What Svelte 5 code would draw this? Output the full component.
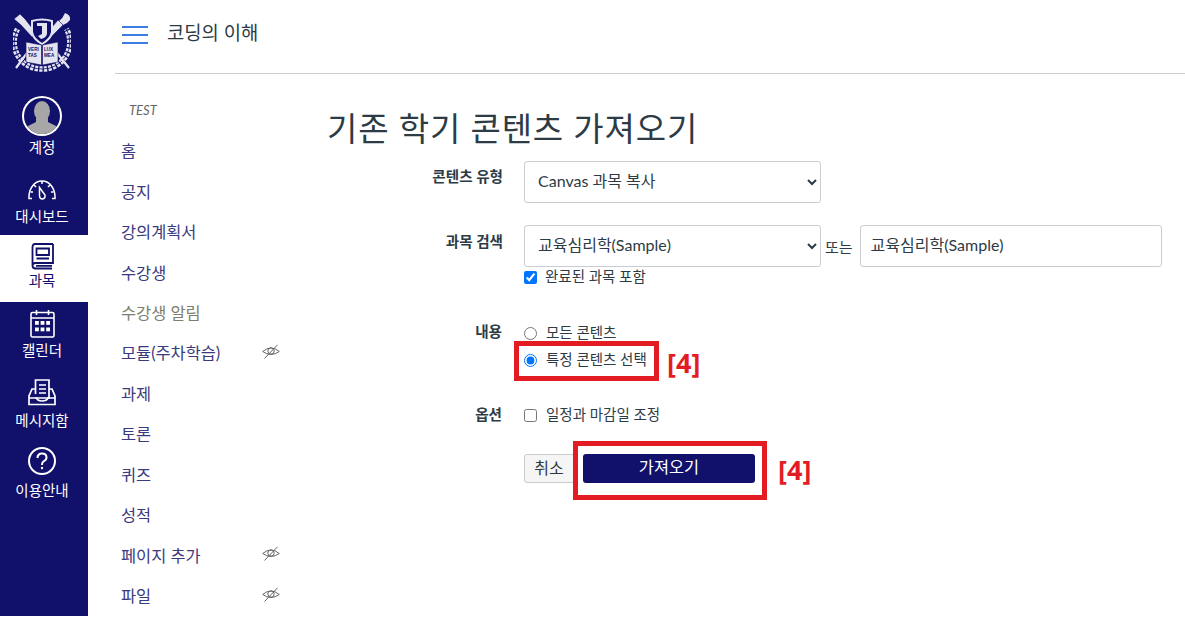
<script>
  const nav = [
    { t: '홈' }, { t: '공지' }, { t: '강의계획서' }, { t: '수강생' },
    { t: '수강생 알림', muted: true }, { t: '모듈(주차학습)', eye: true }, { t: '과제' },
    { t: '토론' }, { t: '퀴즈' }, { t: '성적' }, { t: '페이지 추가', eye: true }, { t: '파일', eye: true }
  ];
</script>

<div class="page">
  <aside class="rail">
    <div class="logo">
      <svg width="58" height="60" viewBox="0 0 58 60" fill="none" stroke="#e4e4f0">
        <path d="M4.500 17 A27 27 0 0 0 29 57 A27 27 0 0 0 53.500 17" stroke-width="5.500" stroke-dasharray="3.200 1.300"/>
        <path d="M4.500 17 A27 27 0 0 0 29 57 A27 27 0 0 0 53.500 17" stroke="#11106b" stroke-width=".8"/>
        <path d="M1 7 L7 2 L12 7 L23 21 L19 25 L8 13 Z" fill="#e4e4f0" stroke="#11106b" stroke-width=".6"/>
        <path d="M52 1 Q58 3 57 8 Q54 12 50 13 L46 9 Q50 6 52 1 Z" fill="#e4e4f0" stroke="none"/>
        <path d="M45 8 L50 13 L38 25 L34 21 Z" fill="#e4e4f0" stroke="#11106b" stroke-width=".6"/>
        <path d="M44 41 L56 56 M14 41 L3 56" stroke-width="2.200"/>
        <path d="M19 9 Q29 6 39 9 L39 20 Q38 27 29 32 Q20 27 19 20 Z" fill="#11106b" stroke-width="2"/>
        <path d="M24 11 H34 V22 Q33 26 28 27 L25 24 L29 22 V14 H24 Z" fill="#e4e4f0" stroke="none"/>
        <path d="M13 30 L28.500 33 V53 L13 50 Z M45 30 L29.500 33 V53 L45 50 Z" fill="#e4e4f0" stroke="#11106b" stroke-width=".6"/>
        <g class="motto" fill="#11106b" stroke="none">
          <text x="15" y="39">VERI</text><text x="31" y="39">LUX</text>
          <text x="15" y="45">TAS</text><text x="31" y="45">MEA</text>
        </g>
      </svg>
    </div>

    <a class="rail-item acct">
      <span class="avatar">
        <svg width="40" height="40" viewBox="0 0 40 40">
          <circle cx="20" cy="20" r="20" fill="#fff"/>
          <circle cx="20" cy="20" r="18" fill="#11106b"/>
          <clipPath id="av"><circle cx="20" cy="20" r="18"/></clipPath>
          <g clip-path="url(#av)" fill="#a7a7a7">
            <ellipse cx="20" cy="15" rx="8" ry="10"/>
            <path d="M14 22 H26 V26 L36 31 V40 H4 V31 L14 26 Z"/>
          </g>
        </svg>
      </span>
      <span class="lbl">계정</span>
    </a>

    <a class="rail-item dash">
      <svg width="28" height="20" viewBox="0 0 28 20" fill="none" stroke="#fff" stroke-width="1.500">
        <path d="M4 18.500 H1 C.5 9 6 1 14 1 C22 1 27.500 9 27 18.500 H24"/>
        <path d="M14 1 V4 M6 5 L8 7 M22 5 L20 7 M2.500 12 H5 M25.500 12 H23"/>
        <path d="M11.500 7.500 L17 15 Q17.500 18.500 14.500 19 Q11.500 19 11.500 15.500 Z"/>
      </svg>
      <span class="lbl">대시보드</span>
    </a>

    <a class="rail-item active">
      <svg width="23" height="27" viewBox="0 0 23 27" fill="none" stroke="#11106b" stroke-width="1.800">
        <path d="M22 1 H4 Q1.500 1 1.500 4 V22.500 Q1.500 25.500 4.500 25.500 H21 M22 1 V20 H4.500 Q1.500 20 1.500 22.500 M21 22.800 H5"/>
        <path d="M5.500 5.500 H18 V12 H5.500 Z M5.500 15.500 H18"/>
      </svg>
      <span class="lbl">과목</span>
    </a>

    <a class="rail-item cal">
      <svg width="25" height="29" viewBox="0 0 25 29" fill="none" stroke="#fff" stroke-width="1.600">
        <rect x="1" y="3.500" width="23" height="24.500" rx="1.500"/>
        <path d="M1 9 H24 M6.500 1 V6 M18.500 1 V6"/>
        <g fill="#fff" stroke="none">
          <rect x="5" y="12" width="3.800" height="3.800"/><rect x="10.600" y="12" width="3.800" height="3.800"/><rect x="16.200" y="12" width="3.800" height="3.800"/>
          <rect x="5" y="18.500" width="3.800" height="3.800"/><rect x="10.600" y="18.500" width="3.800" height="3.800"/><rect x="16.200" y="18.500" width="3.800" height="3.800"/>
        </g>
      </svg>
      <span class="lbl">캘린더</span>
    </a>

    <a class="rail-item inbox">
      <svg width="28" height="27" viewBox="0 0 28 27" fill="none" stroke="#fff" stroke-width="1.700">
        <path d="M7.500 15 V1 H21 V19 H7.500"/>
        <path d="M11 6 H18 M11 10 H18 M11 14 H18"/>
        <path d="M7.500 10 H4 L1 17 V25.500 H27 V17 L24 10 H21 M1 19 H8.500 Q9.500 22 14 22 Q19 22 20 19 H27"/>
      </svg>
      <span class="lbl">메시지함</span>
    </a>

    <a class="rail-item help">
      <svg width="28" height="28" viewBox="0 0 28 28" fill="none" stroke="#fff" stroke-width="2">
        <circle cx="14" cy="14" r="13"/>
        <path d="M9.500 11 Q9.500 6.500 14 6.500 Q18.500 6.500 18.500 10.500 Q18.500 13 15.500 14.300 Q14 15 14 18"/>
        <circle cx="14" cy="21" r="1.200" fill="#fff" stroke="none"/>
      </svg>
      <span class="lbl">이용안내</span>
    </a>
  </aside>

  <div class="main">
    <header class="top">
      <span class="burger"><i></i><i></i><i></i></span>
      <span class="crumb">코딩의 이해</span>
    </header>

    <div class="body">
      <nav class="course">
        <div class="term">TEST</div>
        {#each nav as n}
          <a class="nav-item" class:muted={n.muted}>
            <span>{n.t}</span>
            {#if n.eye}
              <svg class="eye" width="18" height="15" viewBox="0 0 18 15" fill="none" stroke="#666" stroke-width="1">
                <path d="M.7 7.500 Q9 .5 17.300 7.500 Q9 13.500 .7 7.500 Z"/>
                <circle cx="9" cy="7" r="3.200"/>
                <path d="M2.500 14.500 L15.500 .8"/>
              </svg>
            {/if}
          </a>
        {/each}
      </nav>

      <section class="content">
        <h1>기존 학기 콘텐츠 가져오기</h1>

        <div class="row r1">
          <div class="key">콘텐츠 유형</div>
          <select class="sel"><option>Canvas 과목 복사</option></select>
        </div>

        <div class="row r2">
          <div class="key">과목 검색</div>
          <div class="val">
            <div class="inline">
              <select class="sel"><option>교육심리학(Sample)</option></select>
              <span class="or">또는</span>
              <input class="txt" value="교육심리학(Sample)" />
            </div>
            <label class="opt done"><input type="checkbox" checked /> <span>완료된 과목 포함</span></label>
          </div>
        </div>

        <div class="row r3">
          <div class="key">내용</div>
          <div class="val">
            <label class="opt"><input type="radio" name="c" /> <span>모든 콘텐츠</span></label>
            <div class="marked">
              <label class="opt picked"><input type="radio" name="c" checked /> <span>특정 콘텐츠 선택</span></label>
              <div class="box box-a"></div>
              <span class="tag">[4]</span>
            </div>
          </div>
        </div>

        <div class="row r4">
          <div class="key">옵션</div>
          <label class="opt"><input type="checkbox" /> <span>일정과 마감일 조정</span></label>
        </div>

        <div class="actions">
          <button class="cancel">취소</button>
          <button class="go">가져오기</button>
          <div class="box box-b"></div>
          <span class="tag tag-b">[4]</span>
        </div>
      </section>
    </div>
  </div>
</div>

<style>
  :global(body) { margin: 0; background: #fff; overflow: hidden; }
  .page {
    display: flex; width: 1185px; height: 619px; overflow: hidden;
    font-family: "Lato", "Noto Sans CJK KR", sans-serif; color: #2d3b45;
  }
  .rail { width: 88px; height: 616px; background: #11106b; flex: none; display: flex; flex-direction: column; }
  .logo { height: 77px; display: flex; justify-content: center; padding: 12px 4px 0 0; box-sizing: border-box; }
  .motto { font: 700 4.600px "Liberation Sans", sans-serif; }
  .rail-item { display: flex; flex-direction: column; align-items: center; color: #fff; box-sizing: border-box; padding-right: 4px; }
  .lbl { font-size: 14.500px; line-height: 18px; margin-top: 1px; }
  .avatar { display: block; height: 40px; }
  .acct { height: 100px; padding-top: 19px; }
  .acct .lbl { margin-top: 3px; }
  .dash { height: 58px; padding-top: 3px; }
  .dash .lbl { margin-top: 8px; }
  .active { background: #fff; height: 67px; padding-top: 8px; }
  .active .lbl { color: #11106b; margin-top: 2px; }
  .cal { height: 68px; padding-top: 7px; }
  .cal .lbl { margin-top: 4px; }
  .inbox { height: 70px; padding-top: 9px; }
  .inbox .lbl { margin-top: 6px; }
  .help { padding-top: 7px; }
  .help .lbl { margin-top: 7px; }

  .main { flex: 1; min-width: 0; display: flex; flex-direction: column; padding-left: 27px; }
  .top { height: 74px; flex: none; box-sizing: border-box; border-bottom: 1px solid #c7cdd1; display: flex; align-items: flex-start; gap: 19px; padding: 20px 0 0 7px; }
  .burger { display: flex; flex-direction: column; gap: 6px; width: 26px; padding-top: 6px; }
  .burger i { display: block; height: 2px; background: #3b7de0; }
  .crumb { font-size: 18.800px; line-height: 24px; color: #2d3b45; margin-top: 1px; }

  .body { display: flex; flex: 1; }
  .course { width: 212px; flex: none; padding: 28px 0 0 6px; box-sizing: border-box; }
  .term { font-size: 13px; font-style: italic; line-height: 16px; color: #666; padding-left: 8px; margin-bottom: 12px; }
  .nav-item { display: flex; align-items: center; justify-content: space-between; width: 159px; height: 40.450px; font-size: 16.400px; color: #3a3a80; }
  .nav-item.muted { color: #7d7d6e; }
  .eye { margin-top: -2px; }

  .content { flex: 1; min-width: 0; position: relative; }
  h1 { font-size: 33px; font-weight: 400; line-height: 40px; margin: 34px 0 13px; color: #2d3b45; letter-spacing: .85px; }
  .row { display: flex; align-items: flex-start; }
  .key { width: 176px; text-align: right; font-size: 14.600px; font-weight: 700; line-height: 20px; padding-top: 6px; margin-right: 21px; flex: none; }
  .sel {
    width: 297px; height: 42px; flex: none; box-sizing: border-box; background: #fff;
    border: 1px solid #c7cdd1; border-radius: 3px; padding: 0 9px 4px; font: inherit; font-size: 16px; color: #2d3b45;
  }
  .r1 { height: 64px; }
  .r2 { height: 98px; }
  .r2 .key { padding-top: 7px; }
  .inline { display: flex; align-items: center; }
  .or { font-size: 15px; margin: 0 7px 0 4px; }
  .txt { width: 302px; height: 42px; box-sizing: border-box; border: 1px solid #c7cdd1; border-radius: 3px; padding: 0 10px 5px; font: inherit; font-size: 16px; color: #2d3b45; }
  .opt { display: flex; align-items: center; gap: 9px; font-size: 14.500px; line-height: 20px; height: 20px; color: #2d3b45; }
  .opt input { margin: 0; width: 13px; height: 13px; }
  .done { margin-top: 0; gap: 8px; }
  .val { position: relative; }
  .r3 { height: 82px; }
  .r3 .key { padding-top: 0; margin: -1px 22px 0 0; width: 175px; }
  .marked { position: relative; margin-top: 7px; }
  .r4 { height: 49px; }
  .r4 .key { padding-top: 0; margin-right: 22px; width: 175px; }
  .box { position: absolute; border: 5px solid #e31c24; box-sizing: border-box; }
  .box-a { left: -10px; top: -9px; width: 145px; height: 40px; }
  .tag { position: absolute; left: 143px; top: -3px; font: 700 27px/32px "Noto Sans", sans-serif; color: #e31c24; }
  .actions { position: relative; display: flex; align-items: flex-start; margin-left: 197px; gap: 6px; }
  .cancel { width: 54px; height: 29px; margin: 0 -1px 0 0; padding: 0 4px 5px 0; border: 1px solid #c7cdd1; border-radius: 3px; background: #f5f5f5; font: inherit; font-size: 16px; color: #2d3b45; }
  .go { width: 172px; height: 29px; margin: 0; padding: 0 0 5px; border: 0; border-radius: 3px; background: #11106b; color: #fff; font: inherit; font-size: 16.400px; position: relative; z-index: 1; }
  .box-b { left: 49px; top: -13px; width: 194px; height: 59px; }
  .tag-b { left: 254px; top: 0; }
</style>
